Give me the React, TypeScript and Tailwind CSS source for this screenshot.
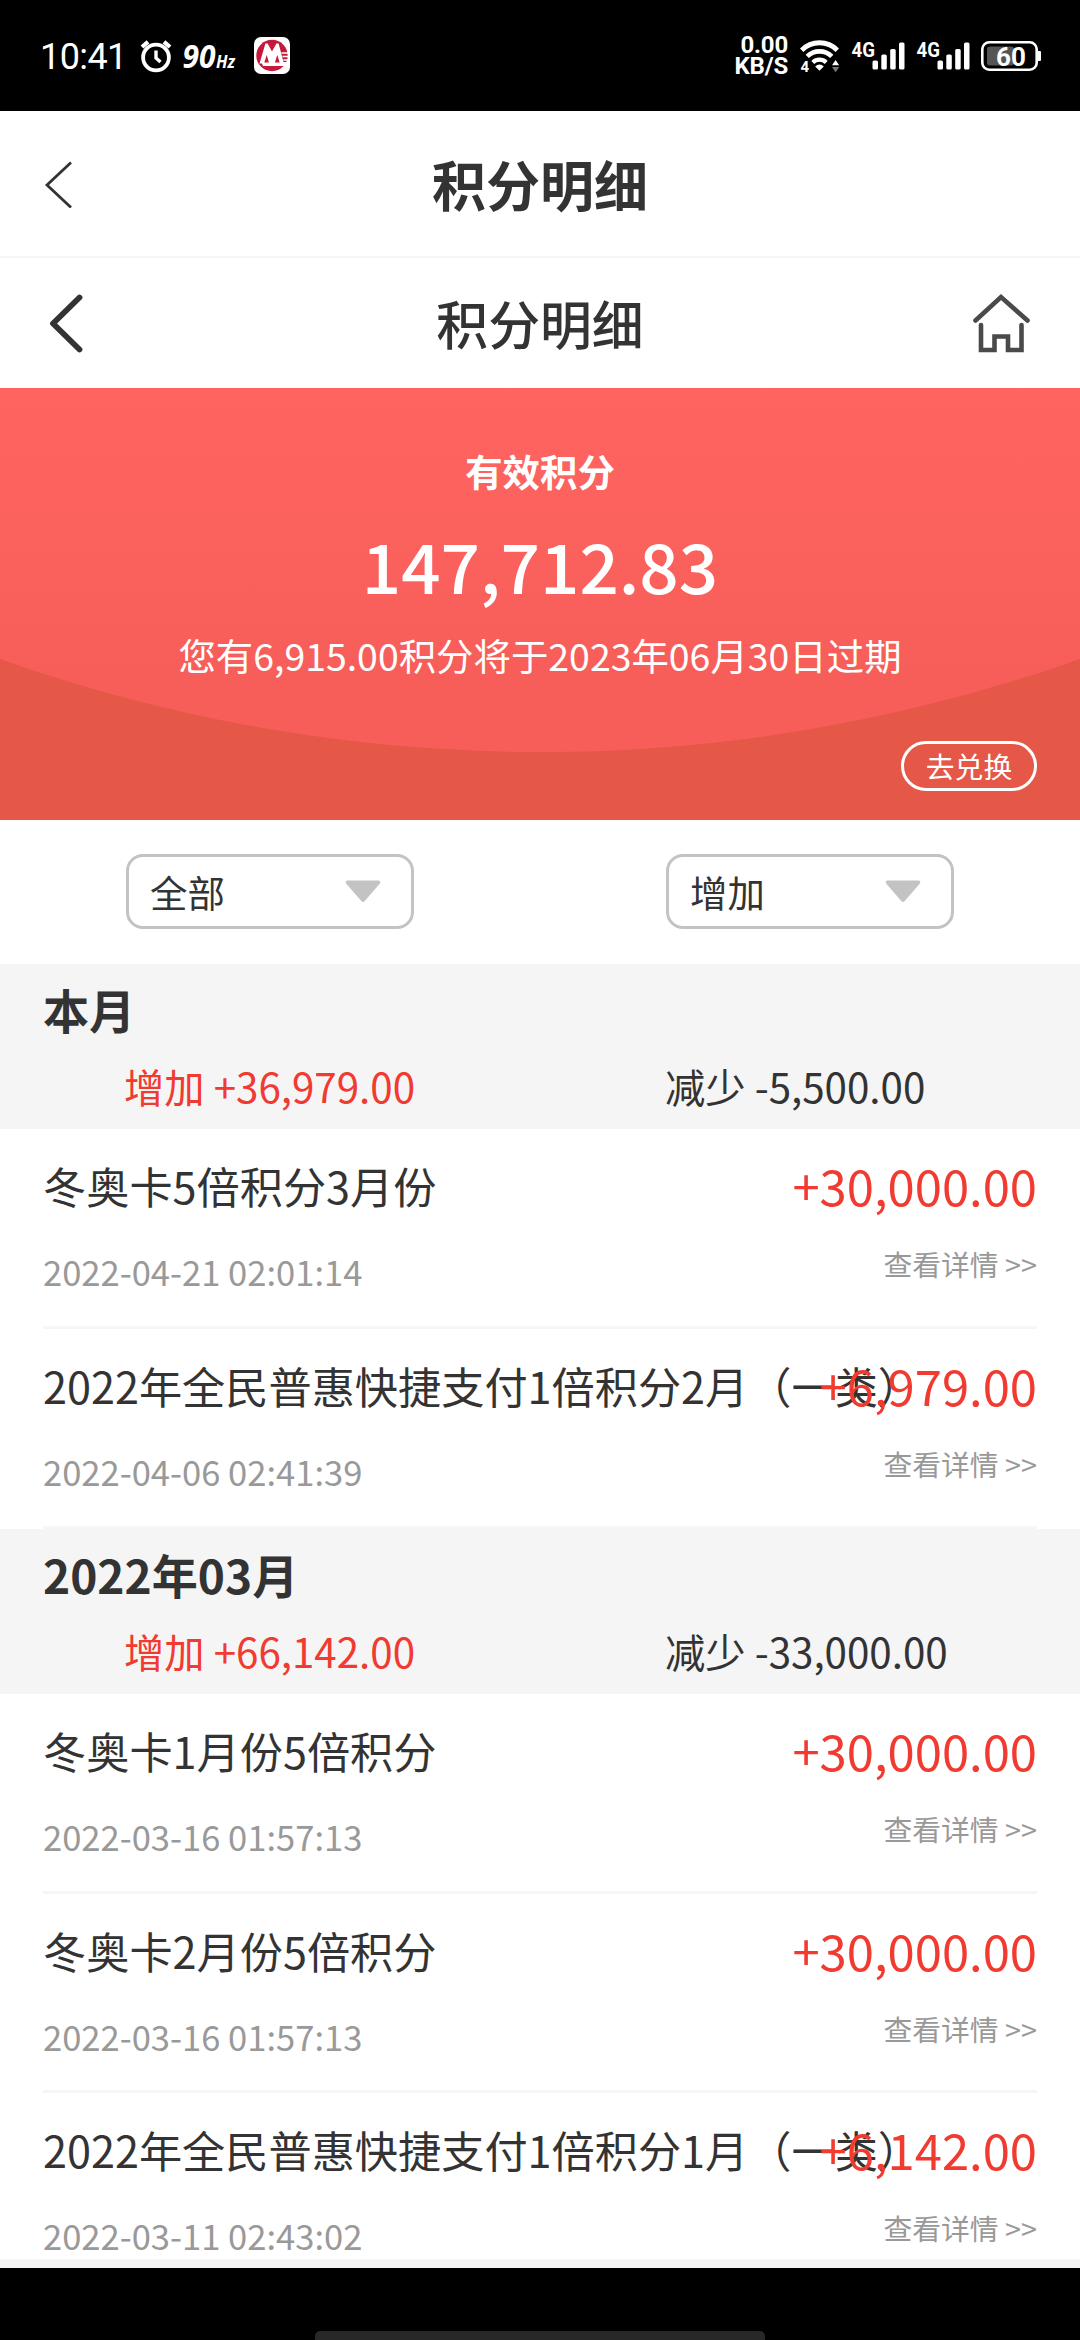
import { useState } from 'react';

type PointRecord = {
  title: string;
  time: string;
  amount: string;
};

type MonthGroup = {
  month: string;
  added: string;
  reduced: string;
  records: PointRecord[];
};

const GROUPS: MonthGroup[] = [
  {
    month: '本月',
    added: '+36,979.00',
    reduced: '-5,500.00',
    records: [
      { title: '冬奥卡5倍积分3月份', time: '2022-04-21 02:01:14', amount: '+30,000.00' },
      { title: '2022年全民普惠快捷支付1倍积分2月（一类）', time: '2022-04-06 02:41:39', amount: '+6,979.00' },
    ],
  },
  {
    month: '2022年03月',
    added: '+66,142.00',
    reduced: '-33,000.00',
    records: [
      { title: '冬奥卡1月份5倍积分', time: '2022-03-16 01:57:13', amount: '+30,000.00' },
      { title: '冬奥卡2月份5倍积分', time: '2022-03-16 01:57:13', amount: '+30,000.00' },
      { title: '2022年全民普惠快捷支付1倍积分1月（一类）', time: '2022-03-11 02:43:02', amount: '+6,142.00' },
    ],
  },
];

function Signal() {
  return (
    <svg className="overflow-visible" width="54" height="32" viewBox="0 0 54 32" fill="#fff">
      <text x="0.5" y="16.5" fontSize="19.5" fontWeight="700" textLength="23.5" lengthAdjust="spacingAndGlyphs">
        4G
      </text>
      <rect x="21.5" y="20.5" width="5.5" height="9" rx="1.5" />
      <rect x="30.3" y="14.5" width="5.5" height="15" rx="1.5" />
      <rect x="39.2" y="9" width="5.5" height="20.5" rx="1.5" />
      <rect x="48" y="2.5" width="5.5" height="27" rx="1.5" />
    </svg>
  );
}

function StatusBar() {
  return (
    <div className="flex h-[111px] shrink-0 items-center justify-between bg-black pl-10 pr-[39px] font-[Roboto,sans-serif] text-white">
      <div className="flex items-center">
        <span className="w-[92px] pt-0.5 text-[36px] leading-[44px] tracking-[-0.6px]">10:41</span>

        {/* alarm */}
        <svg className="ml-2" width="32" height="34" viewBox="0 0 32 34" fill="none" stroke="#fff">
          <circle cx="16" cy="18.5" r="12.9" strokeWidth="3.8" />
          <path d="M2 8L8 2.8M30 8L24 2.8" strokeWidth="4.2" />
          <path d="M16 11.5V19L20.5 23" strokeWidth="3.4" />
        </svg>

        {/* refresh rate */}
        <svg className="ml-2.5 overflow-visible" width="56" height="34" viewBox="0 0 56 34" fill="#fff">
          <g fontFamily="'Open Sans', sans-serif" fontWeight="700" fontStyle="italic">
            <text x="0.5" y="29" fontSize="32" textLength="33" lengthAdjust="spacingAndGlyphs">90</text>
            <text x="34" y="29" fontSize="18" textLength="19" lengthAdjust="spacingAndGlyphs">Hz</text>
          </g>
        </svg>

        {/* bank app notification */}
        <svg className="ml-4" width="36" height="37" viewBox="0 0 36 37">
          <rect width="36" height="37" rx="7" fill="#fff" />
          <circle cx="18" cy="18.5" r="15.7" fill="#c4193b" />
          <path
            d="M6 25L11.4 6.5H13.6L18 14.5L22.4 6.5H24.6L29.5 25H33.5L31 29H9L8 26.5H5.5Z"
            fill="#fff"
          />
          <path d="M12.7 18L10.3 25.5H14.9Z" fill="#c4193b" />
          <path d="M23.3 18L20.9 25.5H25.7Z" fill="#c4193b" />
          <path d="M27.5 16H36M28.5 19.5H36M29.5 23H36" stroke="#fff" strokeWidth="1.7" />
        </svg>
      </div>

      <div className="flex items-center">
        <div className="text-right text-[24px] font-bold leading-[21px] tracking-[-0.2px]">
          <p>0.00</p>
          <p>KB/S</p>
        </div>

        {/* wifi */}
        <svg className="ml-3 overflow-visible" width="40" height="34" viewBox="0 0 40 34" fill="none" stroke="#fff">
          <path d="M1.7 11.2A25 25 0 0 1 37.3 11.2" strokeWidth="4.8" />
          <path d="M7.2 17.4A17.5 17.5 0 0 1 31.8 17.4" strokeWidth="4.6" />
          <path d="M12.8 23.4A9.6 9.6 0 0 1 26.2 23.4" strokeWidth="4.2" />
          <path d="M19.5 31.8L15.2 27.4A6 6 0 0 1 23.8 27.4Z" fill="#fff" stroke="none" />
          <text x="0.5" y="32.5" fontSize="15" fontWeight="700" fill="#fff" stroke="none">4</text>
          <path d="M32 26.3L35.6 21L39.2 26.3Z" fill="#fff" stroke="none" />
          <path d="M32 28L35.6 33.3L39.2 28Z" fill="#777" stroke="none" />
        </svg>

        <div className="ml-[11px] flex gap-[11px]">
          <Signal />
          <Signal />
        </div>

        {/* battery */}
        <svg className="ml-[11px]" width="60" height="30" viewBox="0 0 60 30">
          <rect x="6" y="5.5" width="27" height="19" rx="3" fill="#555" />
          <rect x="1.3" y="1.3" width="54.4" height="27.4" rx="7" fill="none" stroke="#fff" strokeWidth="2.6" />
          <rect x="56" y="10" width="4" height="10" rx="1" fill="#fff" />
          <text x="30" y="24.5" fontSize="26" fontWeight="700" fill="#fff" textAnchor="middle">60</text>
        </svg>
      </div>
    </div>
  );
}

function FilterSelect({ value, onClick }: { value: string; onClick: () => void }) {
  return (
    <button
      onClick={onClick}
      className="flex h-[75px] w-[288px] items-center justify-between rounded-[17px] border-3 border-[#c3c3c3] bg-white pl-[21px] pr-[30px]"
    >
      <span className="pt-0.5 text-[37.44px] leading-[67px]">{value}</span>
      <svg width="36" height="23" viewBox="0 0 36 23" fill="#c3c3c3">
        <path d="M2.5 0.5H33.5Q36.5 1 34.5 4L19.5 21.2Q18 22.8 16.5 21.2L1.5 4Q-0.5 1 2.5 0.5Z" />
      </svg>
    </button>
  );
}

function RecordRow({ record }: { record: PointRecord }) {
  return (
    <li className="relative mx-[43px] h-[199.67px] border-b-3 border-[#f6f6f6] pt-[26px]">
      <p className="whitespace-nowrap text-[43.2px] leading-[60px]">{record.title}</p>
      <p className="mt-8 text-[34.56px] leading-[48px] text-[#999]">{record.time}</p>
      {/* amount floats over long titles */}
      <div className="absolute right-0 top-[25px] text-right">
        <p className="text-[48.96px] leading-[61px] text-[#f13a30]">{record.amount}</p>
        <p className="mt-7 text-[28.8px] leading-[41px] text-[#999]">查看详情 &gt;&gt;</p>
      </div>
    </li>
  );
}

function MonthSection({ group }: { group: MonthGroup }) {
  return (
    <section>
      <div className="h-[165.3px] bg-[#f5f5f5] pt-[15px]">
        <h2 className="pl-[43px] text-[46.08px] font-bold leading-[60px]">{group.month}</h2>
        <div className="mt-[17px] grid grid-cols-2 text-[40.32px] leading-[60px]">
          <span className="pl-[124px] text-[#f13a30]">增加 {group.added}</span>
          <span className="pl-[125px]">减少 {group.reduced}</span>
        </div>
      </div>
      <ul>
        {group.records.map((record, i) => (
          <RecordRow key={i} record={record} />
        ))}
      </ul>
    </section>
  );
}

export default function App() {
  const [category, setCategory] = useState('全部');
  const [direction, setDirection] = useState('增加');

  return (
    <div className="flex h-[2340px] w-[1080px] flex-col overflow-hidden bg-black font-['Noto_Sans_CJK_SC',sans-serif] text-[#333]">
      <StatusBar />

      <main className="h-[2157px] shrink-0 overflow-hidden bg-white">
        {/* native title bar */}
        <header className="grid h-[147px] grid-cols-[120px_1fr_120px] items-center border-b-2 border-[#f5f5f5]">
          <svg className="ml-[44px]" width="30" height="48" viewBox="0 0 30 48" fill="none" stroke="#333" strokeWidth="2.8">
            <path d="M27 2.5L3 25L27 47.5" />
          </svg>
          <h1 className="text-center text-[54px] font-bold leading-[145px]">积分明细</h1>
        </header>

        {/* page title bar */}
        <header className="grid h-[130px] grid-cols-[120px_1fr_120px] items-center">
          <svg className="ml-12" width="36" height="60" viewBox="0 0 36 60" fill="none" stroke="#333" strokeWidth="5.8" strokeLinecap="round" strokeLinejoin="round">
            <path d="M31.5 4.5L5 30.5L31.5 56.5" />
          </svg>
          <h2 className="text-center text-[51.84px] font-medium leading-[130px]">积分明细</h2>
          <svg className="ml-[13px]" width="58" height="60" viewBox="0 0 58 60" fill="none" stroke="#4a4a4a" strokeWidth="4.6" strokeLinecap="round">
            <path d="M2.5 27.5L28 4L54.5 27.5" />
            <path d="M8 32V57H21.5V43.5H35V57H48.5V32" />
          </svg>
        </header>

        {/* valid points */}
        <section className="relative h-[432px] overflow-hidden bg-[#e55746] text-white">
          <svg className="absolute inset-0" width="1080" height="432" viewBox="0 0 1080 432">
            <defs>
              <linearGradient id="hero" x1="0" y1="0" x2="0" y2="1">
                <stop offset="0" stopColor="#ff6461" />
                <stop offset="0.8" stopColor="#f75e59" />
              </linearGradient>
            </defs>
            <path d="M0 0H1080V271A1614 1614 0 0 1 0 271Z" fill="url(#hero)" />
          </svg>
          <div className="relative flex flex-col items-center pt-[55px]">
            <p className="text-[37.44px] font-bold leading-[56px]">有效积分</p>
            <p className="mt-[15px] text-[69.12px] font-medium leading-[100px]">147,712.83</p>
            <p className="mt-[13px] text-[37.44px] leading-[56px]">您有6,915.00积分将于2023年06月30日过期</p>
          </div>
          <button className="absolute right-[43px] top-[353px] h-[50px] w-[136px] rounded-full border-3 border-white text-[28.8px] leading-[42px]">
            去兑换
          </button>
        </section>

        {/* filters */}
        <div className="grid h-36 grid-cols-2 items-start pt-[34px]">
          <div className="pl-[126px]">
            <FilterSelect value={category} onClick={() => setCategory('全部')} />
          </div>
          <div className="pl-[126px]">
            <FilterSelect value={direction} onClick={() => setDirection('增加')} />
          </div>
        </div>

        <div className="h-[1295px] overflow-hidden">
          {GROUPS.map((group) => (
            <MonthSection key={group.month} group={group} />
          ))}
        </div>
        <div className="h-[9px] bg-[#f5f5f5]" />
      </main>

      {/* gesture bar */}
      <div className="flex flex-1 items-end justify-center">
        <div className="h-[9px] w-[450px] rounded-t-[5px] bg-[#282828]" />
      </div>
    </div>
  );
}
